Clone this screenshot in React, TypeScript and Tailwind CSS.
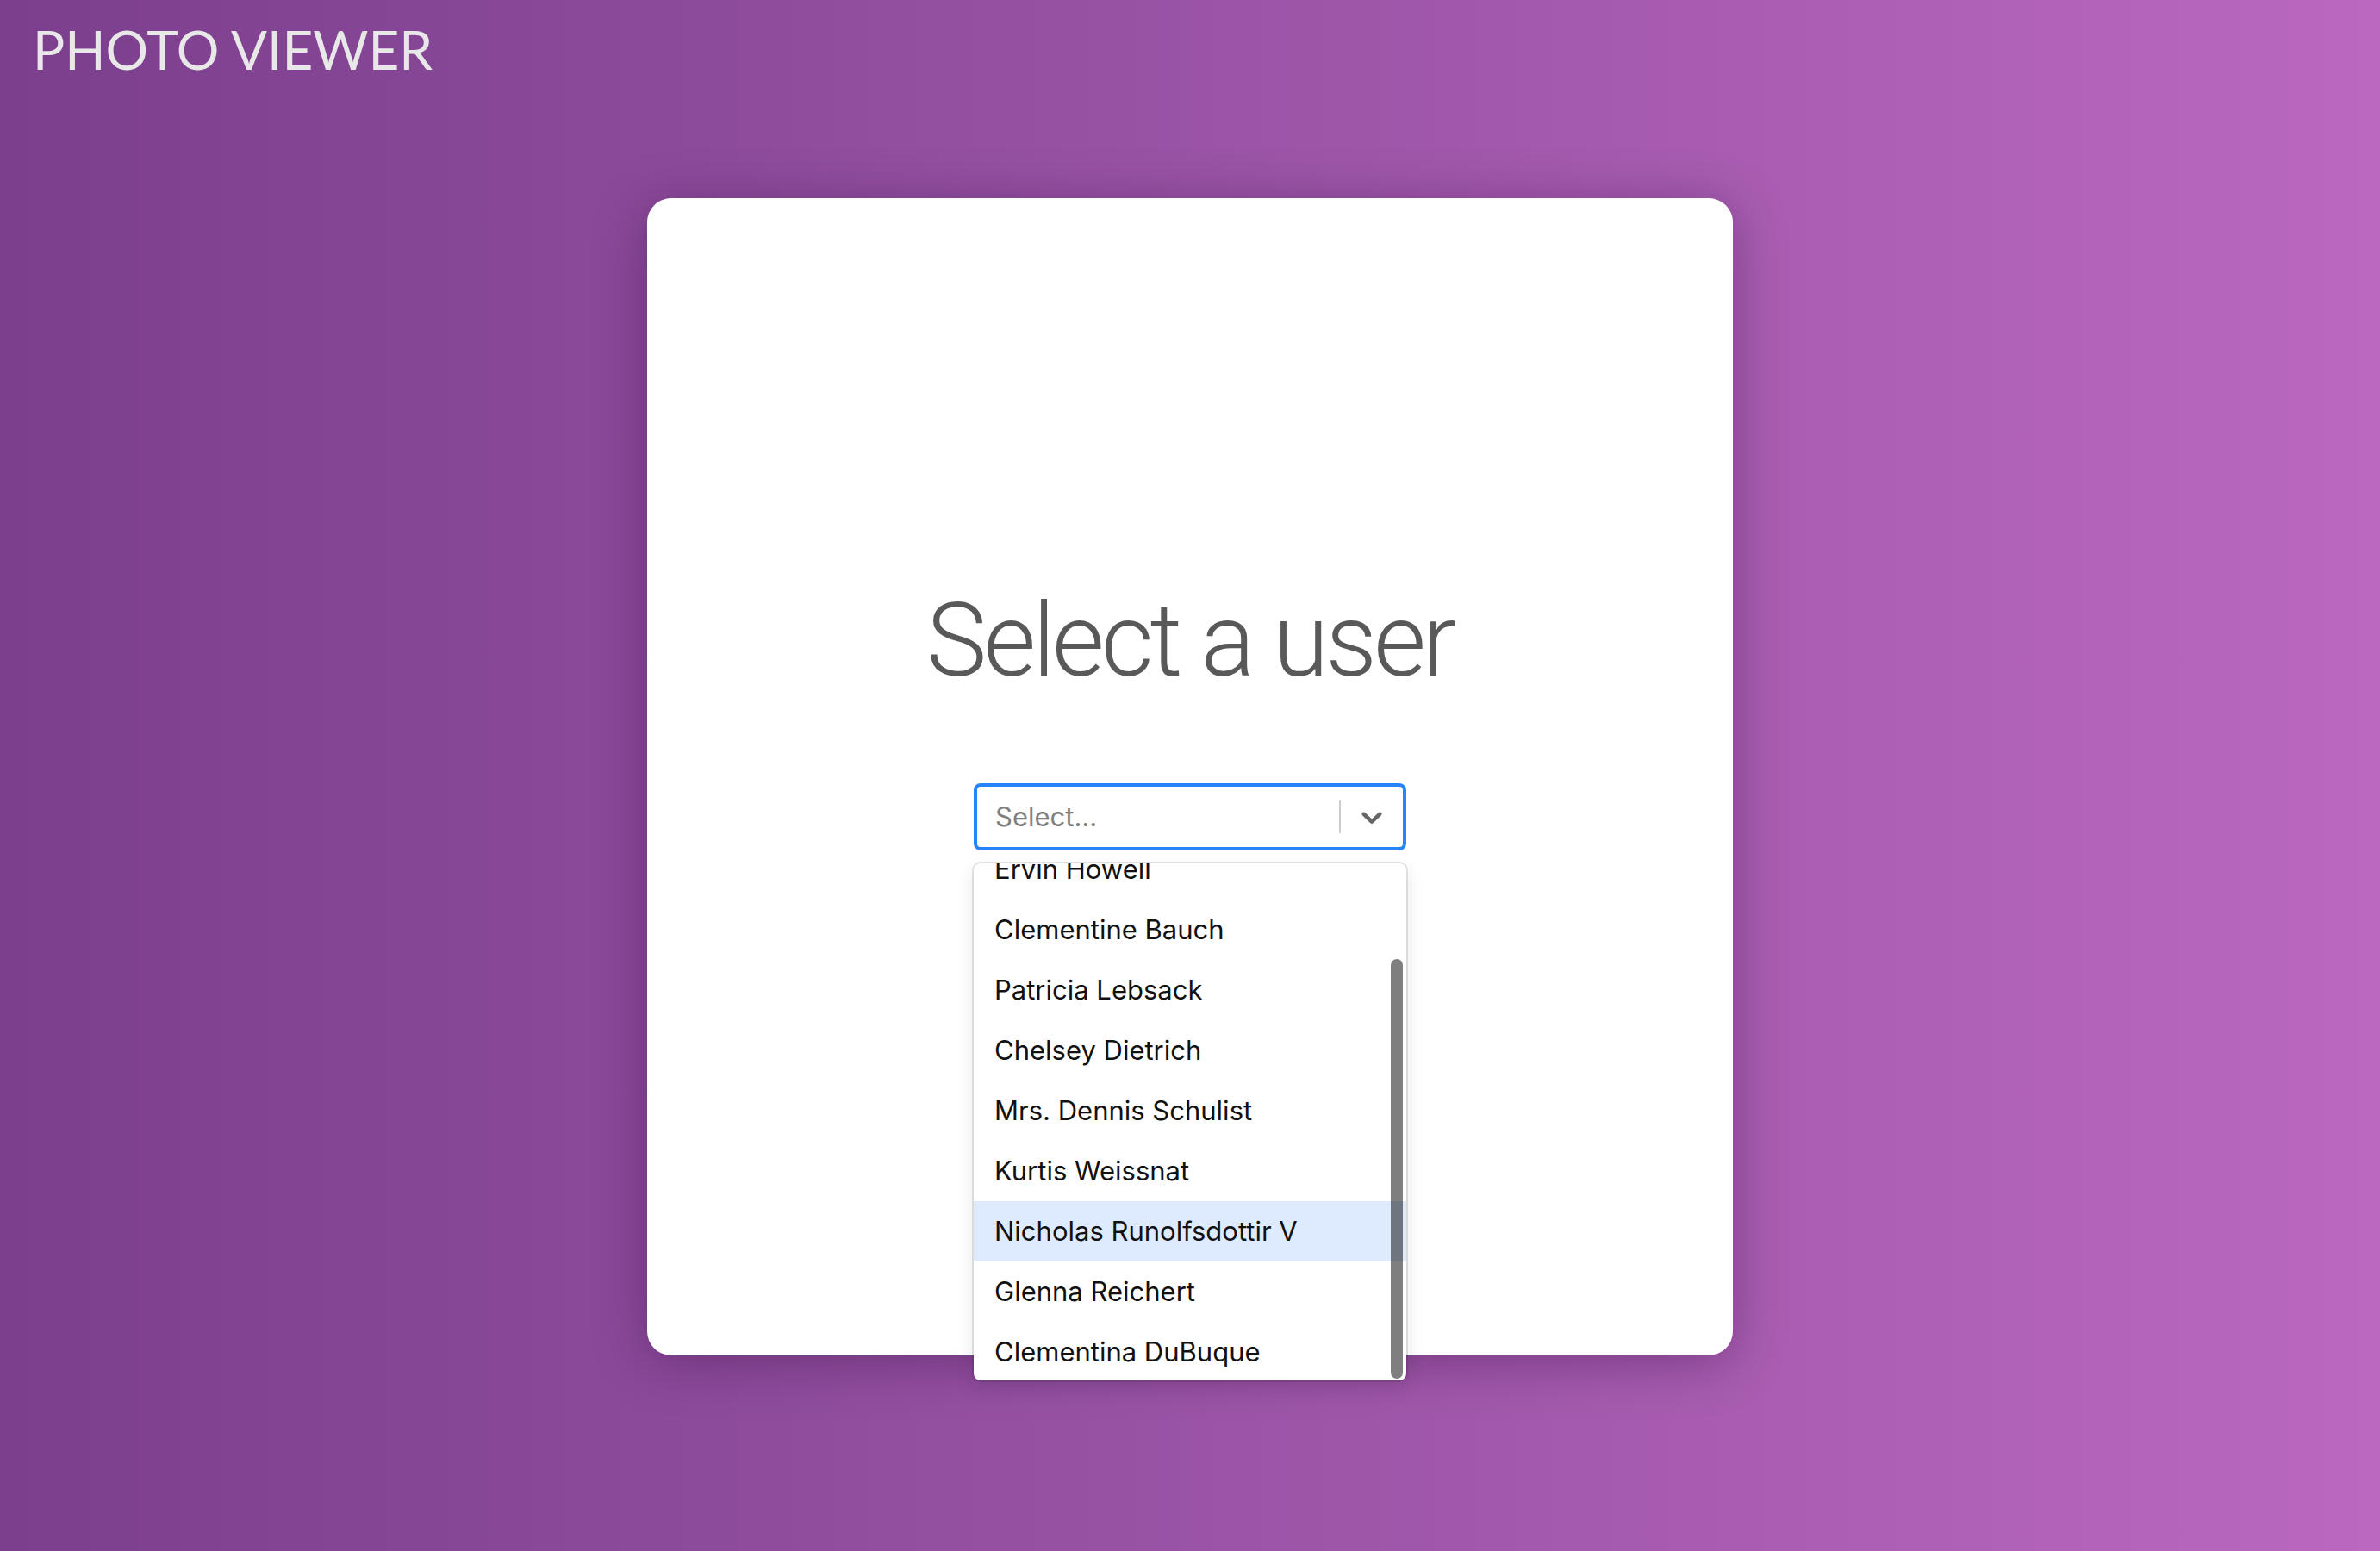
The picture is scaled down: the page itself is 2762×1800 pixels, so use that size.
import React from "react";

const users = [
  "Leanne Graham",
  "Ervin Howell",
  "Clementine Bauch",
  "Patricia Lebsack",
  "Chelsey Dietrich",
  "Mrs. Dennis Schulist",
  "Kurtis Weissnat",
  "Nicholas Runolfsdottir V",
  "Glenna Reichert",
  "Clementina DuBuque",
];

function Chevron() {
  return (
    <svg viewBox="0 0 20 20" className="h-[40px] w-[40px] fill-[#666666]" aria-hidden="true">
      <path d="M4.516 7.548c0.436-0.446 1.043-0.481 1.576 0l3.908 3.747 3.908-3.747c0.533-0.481 1.141-0.446 1.574 0 0.436 0.445 0.408 1.197 0 1.615-0.406 0.418-4.695 4.502-4.695 4.502-0.217 0.223-0.502 0.335-0.787 0.335s-0.57-0.112-0.789-0.335c0 0-4.287-4.084-4.695-4.502s-0.436-1.17 0-1.615z" />
    </svg>
  );
}

function UserSelect() {
  return (
    <div className="relative mx-auto w-[502px] font-['Inter',sans-serif] text-[31px]">
      <div className="flex h-[78px] items-center rounded-[8px] border-[4px] border-[#2684FF] bg-white">
        <div className="flex-1 px-[16px] pl-[21px] text-[#808080]">Select...</div>
        <div className="flex items-center self-stretch">
          <span className="my-[16px] w-[2px] self-stretch bg-[#cccccc]" />
          <div className="p-[16px]">
            <Chevron />
          </div>
        </div>
      </div>
      <div className="absolute left-0 right-0 top-[93px] z-10 overflow-hidden rounded-[8px] bg-white shadow-[0_0_0_2px_rgba(0,0,0,0.1),0_8px_22px_rgba(0,0,0,0.1)]">
        <div className="relative h-[600px] overflow-hidden">
          <div className="-mt-[106px] py-[8px]">
            {users.map((name) => (
              <div
                key={name}
                className={
                  "flex h-[70px] items-center px-[24px] text-[#111111] " +
                  (name === "Nicholas Runolfsdottir V" ? "bg-[#DEEBFF]" : "")
                }
              >
                {name}
              </div>
            ))}
          </div>
          <div className="absolute right-[4px] top-[111px] h-[487px] w-[14px] rounded-full bg-black/50" />
        </div>
      </div>
    </div>
  );
}

export default function App() {
  return (
    <div className="h-[1800px] w-full overflow-hidden bg-gradient-to-r from-[#7b3f8d] to-[#ba68c0]">
      <header className="pl-[38px] pt-[26px]">
        <h1 className="font-['Lato',sans-serif] text-[62px] leading-none text-[#e8e8e8]">PHOTO VIEWER</h1>
      </header>
      <main className="mx-auto mt-[142px] h-[1343px] w-[1260px] rounded-[28px] bg-white pt-[455px] shadow-[0_8px_60px_rgba(40,0,50,0.35)]">
        <h2 className="text-center font-['Roboto',sans-serif] text-[118px] font-light leading-none tracking-[-4px] text-[#595959]">
          Select a user
        </h2>
        <div className="mt-[106px]">
          <UserSelect />
        </div>
      </main>
    </div>
  );
}
